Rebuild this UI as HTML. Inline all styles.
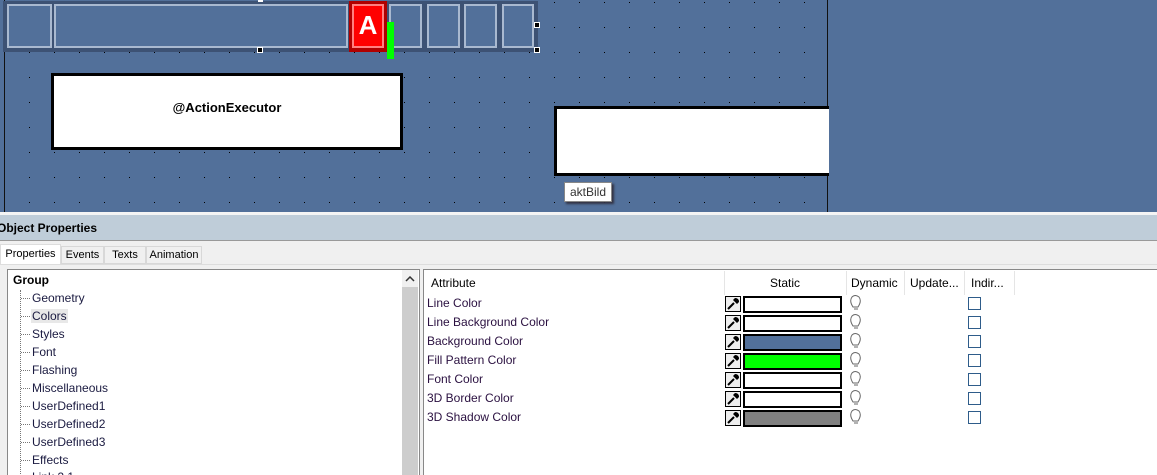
<!DOCTYPE html>
<html style="overflow:hidden;width:1157px;height:475px"><head><style>
*{margin:0;padding:0;box-sizing:border-box}
body{width:1157px;height:475px;overflow:hidden;background:#f0f0f0;font-family:"Liberation Sans",sans-serif;font-size:12px;position:relative;color:#000;white-space:nowrap}
.a{position:absolute}
.canvas{left:0;top:0;width:1157px;height:212px;background:#52709a}
.box{border:2px solid #a9b9d0;background:#52709a}
.h{width:6px;height:6px;background:#000;border:1px solid #fff}
.tree div{position:absolute;left:32px;font-size:12px;color:#1a1a40}
.tree div.c{left:21px;width:9px;height:0;border-top:1px dotted #777}
.row{position:absolute;left:427px;font-size:12px;color:#2a1040}
.sw{position:absolute;left:743px;width:99px;height:17px;border:2px solid #000}
.pk{position:absolute;left:725px;width:16px;height:16px;border:1px solid #000;background:#ddd}
.cb{position:absolute;left:968px;width:13px;height:13px;border:1px solid #2e5c8a;background:#fff}
</style></head><body>
<div class="a canvas"></div>
<svg class="a" style="left:5px;top:0" width="822" height="212">
<defs><pattern id="p" x="-1" y="2" width="25" height="25" patternUnits="userSpaceOnUse"><rect x="0" y="0" width="1" height="1" fill="#000"/></pattern></defs>
<rect width="822" height="212" fill="url(#p)"/></svg>
<div class="a" style="left:4px;top:0;width:1px;height:212px;background:#111"></div>
<div class="a" style="left:827px;top:0;width:1px;height:212px;background:#111"></div>
<div class="a" style="left:3px;top:1px;width:535px;height:51px;background:#3d5274"></div>
<div class="a box" style="left:7px;top:4px;width:45px;height:44px"></div>
<div class="a box" style="left:54px;top:4px;width:294px;height:44px"></div>
<div class="a" style="left:349px;top:1px;width:38px;height:51px;background:#b00000"></div>
<div class="a" style="left:352px;top:4px;width:32px;height:44px;background:#f00;border:2px solid #ff8080;color:#fff;font-weight:bold;font-size:26px;text-align:center;line-height:38px">A</div>
<div class="a box" style="left:389px;top:4px;width:33px;height:44px"></div>
<div class="a box" style="left:427px;top:4px;width:33px;height:44px"></div>
<div class="a box" style="left:464px;top:4px;width:33px;height:44px"></div>
<div class="a box" style="left:502px;top:4px;width:32px;height:44px"></div>
<div class="a" style="left:387px;top:22px;width:7px;height:37px;background:#0f0"></div>
<div class="a h" style="left:257px;top:47px"></div>
<div class="a h" style="left:534px;top:22px"></div>
<div class="a h" style="left:534px;top:47px"></div>
<div class="a" style="left:258px;top:0;width:5px;height:2px;background:#fff"></div>
<div class="a" style="left:51px;top:73px;width:352px;height:77px;background:#fff;border:3px solid #000;text-align:center;line-height:64px;font-weight:bold;font-size:13px">@ActionExecutor</div>
<div class="a" style="left:554px;top:106px;width:275px;height:70px;background:#fff;border:3px solid #000;border-right:none"></div>
<div class="a" style="left:564px;top:182px;width:48px;height:20px;background:#fff;border:1px solid #888;box-shadow:2px 2px 2px #334;font-size:12px;line-height:18px;text-align:center;color:#333">aktBild</div>
<div class="a" style="left:0;top:212px;width:1157px;height:3px;background:#f4f4f4"></div>
<div class="a" style="left:0;top:215px;width:1157px;height:26px;background:#bfcdd9;border-bottom:1px solid #999;font-weight:bold;font-size:12px;line-height:26px;text-indent:-3px">Object Properties</div>
<div class="a" style="left:0;top:244px;width:61px;height:21px;background:#fff;border:1px solid #ddd;border-bottom:none;font-size:11px;line-height:19px;text-align:center">Properties</div>
<div class="a" style="left:61px;top:246px;width:43px;height:18px;border:1px solid #d8d8d8;line-height:16px;text-align:center;font-size:11px">Events</div>
<div class="a" style="left:104px;top:246px;width:42px;height:18px;border:1px solid #d8d8d8;line-height:16px;text-align:center;font-size:11px">Texts</div>
<div class="a" style="left:146px;top:246px;width:56px;height:18px;border:1px solid #d8d8d8;line-height:16px;text-align:center;font-size:11px">Animation</div>
<div class="a" style="left:0;top:264px;width:1157px;height:1px;background:#ddd"></div>
<div class="a" style="left:7px;top:269px;width:413px;height:210px;background:#fff;border:1px solid #888"></div>
<div class="a" style="left:402px;top:270px;width:16px;height:205px;background:#cdcdcd"></div>
<div class="a" style="left:402px;top:270px;width:16px;height:17px;background:#f0f0f0"></div>
<svg class="a" style="left:405px;top:276px" width="10" height="6"><path d="M1 5 L5 1 L9 5" fill="none" stroke="#333" stroke-width="1.5"/></svg>
<div class="a" style="left:20px;top:290px;width:0;height:190px;border-left:1px dotted #777"></div>
<div class="a tree">
<div style="left:13px;top:273px;font-weight:bold;font-size:12px;color:#000">Group</div>
<div class="c" style="top:298px"></div><div style="top:291px">Geometry</div>
<div class="c" style="top:316px"></div><div style="top:309px;background:#e8e8e8;padding:0 1px;left:31px">Colors</div>
<div class="c" style="top:334px"></div><div style="top:327px">Styles</div>
<div class="c" style="top:352px"></div><div style="top:345px">Font</div>
<div class="c" style="top:370px"></div><div style="top:363px">Flashing</div>
<div class="c" style="top:388px"></div><div style="top:381px">Miscellaneous</div>
<div class="c" style="top:406px"></div><div style="top:399px">UserDefined1</div>
<div class="c" style="top:424px"></div><div style="top:417px">UserDefined2</div>
<div class="c" style="top:442px"></div><div style="top:435px">UserDefined3</div>
<div class="c" style="top:460px"></div><div style="top:453px">Effects</div>
<div style="top:470px">Link 2 1</div>
</div>
<div class="a" style="left:423px;top:269px;width:734px;height:210px;background:#fff;border:1px solid #888;border-right:none"></div>
<div class="a" style="left:724px;top:271px;width:1px;height:24px;background:#e5e5e5"></div>
<div class="a" style="left:846px;top:271px;width:1px;height:24px;background:#e5e5e5"></div>
<div class="a" style="left:904px;top:271px;width:1px;height:24px;background:#e5e5e5"></div>
<div class="a" style="left:964px;top:271px;width:1px;height:24px;background:#e5e5e5"></div>
<div class="a" style="left:1014px;top:271px;width:1px;height:24px;background:#e5e5e5"></div>
<div class="a" style="left:431px;top:276px">Attribute</div>
<div class="a" style="left:770px;top:276px">Static</div>
<div class="a" style="left:851px;top:276px">Dynamic</div>
<div class="a" style="left:910px;top:276px">Update...</div>
<div class="a" style="left:971px;top:276px">Indir...</div>
<div class="row" style="top:296px">Line Color</div>
<div class="row" style="top:315px">Line Background Color</div>
<div class="row" style="top:334px">Background Color</div>
<div class="row" style="top:353px">Fill Pattern Color</div>
<div class="row" style="top:372px">Font Color</div>
<div class="row" style="top:391px">3D Border Color</div>
<div class="row" style="top:410px">3D Shadow Color</div>
<div class="sw" style="top:296px;background:#fff"></div>
<div class="sw" style="top:315px;background:#fff"></div>
<div class="sw" style="top:334px;background:#52709a"></div>
<div class="sw" style="top:353px;background:#0f0"></div>
<div class="sw" style="top:372px;background:#fff"></div>
<div class="sw" style="top:391px;background:#fff"></div>
<div class="sw" style="top:410px;background:#808080"></div>
<svg class="a" style="left:725px;top:296px" width="16" height="133" viewBox="0 0 16 133">
<defs><g id="pk"><rect x="0.5" y="0.5" width="15" height="15" fill="#eee" stroke="#000"/><path d="M3 13 L9 7" stroke="#000" stroke-width="2"/><path d="M8 4 L12 8 L14 6 Q14 2 10 2 Z" fill="#000"/></g></defs>
<use href="#pk"/><use href="#pk" y="19"/><use href="#pk" y="38"/><use href="#pk" y="57"/><use href="#pk" y="76"/><use href="#pk" y="95"/><use href="#pk" y="114"/>
</svg>
<svg class="a" style="left:849px;top:295px" width="14" height="135" viewBox="0 0 14 135">
<g fill="none" stroke="#666" stroke-width="1">
<path d="M4 12 Q0 6 3 2 Q6 -1 10 2 Q13 6 9 12 Z M5 14 H9"/>
<path transform="translate(0,19)" d="M4 12 Q0 6 3 2 Q6 -1 10 2 Q13 6 9 12 Z M5 14 H9"/>
<path transform="translate(0,38)" d="M4 12 Q0 6 3 2 Q6 -1 10 2 Q13 6 9 12 Z M5 14 H9"/>
<path transform="translate(0,57)" d="M4 12 Q0 6 3 2 Q6 -1 10 2 Q13 6 9 12 Z M5 14 H9"/>
<path transform="translate(0,76)" d="M4 12 Q0 6 3 2 Q6 -1 10 2 Q13 6 9 12 Z M5 14 H9"/>
<path transform="translate(0,95)" d="M4 12 Q0 6 3 2 Q6 -1 10 2 Q13 6 9 12 Z M5 14 H9"/>
<path transform="translate(0,114)" d="M4 12 Q0 6 3 2 Q6 -1 10 2 Q13 6 9 12 Z M5 14 H9"/>
</g></svg>
<div class="cb" style="top:297px"></div>
<div class="cb" style="top:316px"></div>
<div class="cb" style="top:335px"></div>
<div class="cb" style="top:354px"></div>
<div class="cb" style="top:373px"></div>
<div class="cb" style="top:392px"></div>
<div class="cb" style="top:411px"></div>
</body></html>
